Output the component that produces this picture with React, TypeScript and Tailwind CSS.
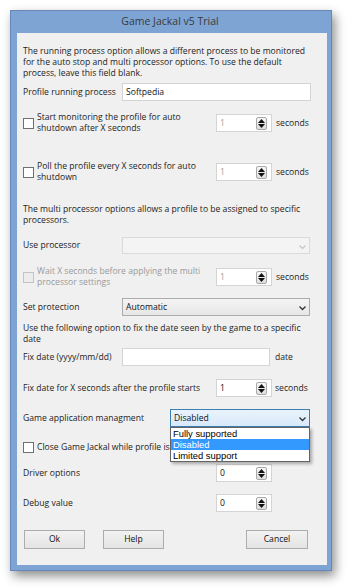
import React from 'react';

const font = { fontFamily: '"Open Sans", "Noto Sans", sans-serif' };
const listFont = { fontFamily: '"Liberation Sans", Arial, sans-serif' };

const Arrows = () => (
  <div className="absolute right-[4px] top-[2px] w-[11px] h-[13px] border border-[#a9a9a9] rounded-[2px] bg-gradient-to-b from-[#f6f6f6] to-[#dedede] flex flex-col items-center justify-center gap-[1px]">
    <svg width="7" height="4" viewBox="0 0 7 4"><path d="M0 4 L3.5 0 L7 4 Z" fill="#111" /></svg>
    <svg width="7" height="4" viewBox="0 0 7 4"><path d="M0 0 L3.5 4 L7 0 Z" fill="#111" /></svg>
  </div>
);

const Spinner = ({ value, grey }: { value: string; grey?: boolean }) => (
  <div className="relative w-[56px] h-[18px] bg-white border border-[#d4d4d4] flex items-center pl-[3px] shrink-0">
    <span className={grey ? 'text-[#9c9c9c]' : 'text-[#111]'}>{value}</span>
    <Arrows />
  </div>
);

const Chevron = ({ faint }: { faint?: boolean }) => (
  <svg width="7" height="5" viewBox="0 0 7 5" className="absolute right-[3px] top-[7px]">
    <path d="M0.5 0.5 L3.5 3.5 L6.5 0.5" stroke={faint ? '#c8c8c8' : '#333'} strokeWidth="1.3" fill="none" />
  </svg>
);

const Checkbox = ({ disabled }: { disabled?: boolean }) => (
  <div className={`w-[11px] h-[11px] border shrink-0 ${disabled ? 'border-[#c4c4c4] bg-[#ececec]' : 'border-[#6f6f6f] bg-white'}`} />
);

export default function App() {
  return (
    <div className="w-[350px] h-[588px] bg-white overflow-hidden text-[8.6px] text-[#1c1c1c]" style={font}>
      <div className="ml-[10px] mt-[10px] w-[322px] h-[561px] bg-[#7ea4d4] border border-[#6588b8] shadow-[3px_5px_10px_rgba(0,0,0,0.45)] flex flex-col">
        <div className="h-[22px] flex items-center justify-center text-[10.5px] text-[#3a3a3a] pr-[2px]">
          Game Jackal v5 Trial
        </div>
        <div className="relative ml-[6px] mr-[4px] h-[532px] bg-[#f0f0f0] pl-[6px] pt-[13px] leading-[11px]">
          <p>
            The running process option allows a different process to be monitored<br />
            for the auto stop and multi processor options. To use the default<br />
            process, leave this field blank.
          </p>

          <div className="mt-[4px] h-[18px] flex items-center">
            <span className="w-[99px]">Profile running process</span>
            <div className="w-[189px] h-[18px] bg-white border border-[#d4d4d4] flex items-center pl-[3px] text-[#111]">Softpedia</div>
          </div>

          <div className="mt-[12px] h-[20px] flex items-center">
            <div className="w-[193px] flex items-center gap-[3px]">
              <Checkbox />
              <span>Start monitoring the profile for auto<br />shutdown after X seconds</span>
            </div>
            <Spinner value="1" grey />
            <span className="ml-[4px]">seconds</span>
          </div>

          <div className="mt-[29px] h-[20px] flex items-center">
            <div className="w-[193px] flex items-center gap-[3px]">
              <Checkbox />
              <span>Poll the profile every X seconds for auto<br />shutdown</span>
            </div>
            <Spinner value="1" grey />
            <span className="ml-[4px]">seconds</span>
          </div>

          <p className="mt-[22px]">
            The multi processor options allows a profile to be assigned to specific<br />
            processors.
          </p>

          <div className="mt-[10px] h-[18px] flex items-center">
            <span className="w-[99px]">Use processor</span>
            <div className="relative w-[188px] h-[17px] bg-[#f4f4f4] border border-[#dadada]">
              <Chevron faint />
            </div>
          </div>

          <div className="mt-[13px] h-[20px] flex items-center">
            <div className="w-[193px] flex items-center gap-[3px] text-[#9a9a9a]">
              <Checkbox disabled />
              <span>Wait X seconds before applying the multi<br />processor settings</span>
            </div>
            <Spinner value="1" grey />
            <span className="ml-[4px]">seconds</span>
          </div>

          <div className="mt-[11px] h-[18px] flex items-center">
            <span className="w-[99px]">Set protection</span>
            <div className="relative w-[188px] h-[18px] bg-gradient-to-b from-[#f4f4f4] to-[#e6e6e6] border border-[#acacac] flex items-center pl-[3px] text-[#111]">
              Automatic
              <Chevron />
            </div>
          </div>

          <p className="mt-[7px]">
            Use the following option to fix the date seen by the game to a specific<br />
            date
          </p>

          <div className="mt-[3px] h-[18px] flex items-center">
            <span className="w-[99px]">Fix date (yyyy/mm/dd)</span>
            <div className="w-[148px] h-[18px] bg-white border border-[#d4d4d4]" />
            <span className="ml-[5px]">date</span>
          </div>

          <div className="mt-[13px] h-[18px] flex items-center">
            <span className="w-[193px]">Fix date for X seconds after the profile starts</span>
            <Spinner value="1" />
            <span className="ml-[3px]">seconds</span>
          </div>

          <div className="mt-[12px] h-[18px] flex items-center">
            <span className="w-[147px]">Game application managment</span>
            <div className="relative w-[140px] h-[18px] bg-gradient-to-b from-[#eaf3fc] to-[#d8e9fb] border border-[#3c7fb1] flex items-center pl-[3px] text-[#111]">
              Disabled
              <Chevron />
            </div>
          </div>

          <div className="mt-[11px] h-[18px] flex items-center gap-[3px]">
            <Checkbox />
            <span>Close Game Jackal while profile is</span>
          </div>

          <div className="mt-[8px] h-[18px] flex items-center">
            <span className="w-[193px]">Driver options</span>
            <Spinner value="0" />
          </div>

          <div className="mt-[12px] h-[18px] flex items-center">
            <span className="w-[193px]">Debug value</span>
            <Spinner value="0" />
          </div>

          <div className="mt-[18px] flex items-center">
            <button className="ml-[1px] w-[61px] h-[19px] border border-[#acacac] bg-gradient-to-b from-[#f2f2f2] to-[#e4e4e4] text-[#111]">Ok</button>
            <button className="ml-[18px] w-[61px] h-[19px] border border-[#acacac] bg-gradient-to-b from-[#f2f2f2] to-[#e4e4e4] text-[#111]">Help</button>
            <button className="ml-[82px] w-[62px] h-[19px] border border-[#acacac] bg-gradient-to-b from-[#f2f2f2] to-[#e4e4e4] text-[#111]">Cancel</button>
          </div>

          <div className="absolute left-[153px] top-[394px] w-[140px] bg-white border border-[#646464] shadow-[2px_2px_3px_rgba(0,0,0,0.3)] text-[9.4px] text-black leading-[11px]" style={listFont}>
            <div className="h-[11px] pl-[2px]">Fully supported</div>
            <div className="h-[11px] pl-[2px] bg-[#3399ff] text-white">Disabled</div>
            <div className="h-[11px] pl-[2px]">Limited support</div>
          </div>
        </div>
      </div>
    </div>
  );
}
